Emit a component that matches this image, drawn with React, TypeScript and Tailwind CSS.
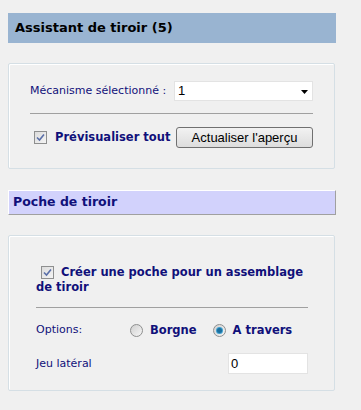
import React from 'react';

const CheckBox = () => (
  <span className="inline-flex h-[13px] w-[13px] shrink-0 items-center justify-center border border-[#8e8f8f] bg-gradient-to-br from-[#dcdcdc] to-[#f4f4f4]">
    <svg width="9" height="9" viewBox="0 0 9 9">
      <path d="M1 4.5 L3.5 7 L8 1.5" fill="none" stroke="#5a6fa8" strokeWidth="1.6" />
    </svg>
  </span>
);

const Radio = ({ checked }: { checked?: boolean }) => (
  <span className="inline-flex h-[13px] w-[13px] shrink-0 items-center justify-center rounded-full border border-[#8e8f8f] bg-gradient-to-br from-[#d0d0d0] to-[#f6f6f6]">
    {checked && <span className="h-[5px] w-[5px] rounded-full bg-[#1b6f9e] shadow-[0_0_0_1px_#3fa0d0]" />}
  </span>
);

const Panel = ({ children, className }: { children: React.ReactNode; className?: string }) => (
  <div className={`w-[327px] rounded-[2px] border border-[#d5dfe5] shadow-[inset_1px_1px_0_#ffffff] ${className ?? ''}`}>
    {children}
  </div>
);

export default function App() {
  return (
    <div className="h-[410px] w-[361px] bg-[#f0f0f0] pl-[8px] pt-[13px] font-['DejaVu_Sans',sans-serif] text-[11px] text-[#10107a]">
      <div className="flex h-[30px] w-[328px] items-center bg-[#99b4d1] pl-[7px] text-[13px] font-bold text-black">
        Assistant de tiroir (5)
      </div>

      <Panel className="mt-[20px] px-[21px] pb-[20px] pt-[17px]">
        <div className="flex items-center justify-between">
          <span>Mécanisme sélectionné :</span>
          <div className="relative flex h-[20px] w-[139px] items-center border border-[#e3e3e3] bg-white pl-[3px] font-['Liberation_Sans',sans-serif] text-[13px] text-black">
            1
            <svg className="absolute right-[4px] top-[8px]" width="7" height="4" viewBox="0 0 7 4">
              <path d="M0 0 H7 L3.5 4 Z" fill="#000" />
            </svg>
          </div>
        </div>
        <div className="mt-[12px] h-px w-full bg-[#a0a0a0]" />
        <div className="mt-[13px] flex items-center pl-[4px]">
          <CheckBox />
          <span className="ml-[8px] whitespace-nowrap text-[11.5px] font-bold">Prévisualiser tout</span>
          <button className="ml-auto h-[21px] w-[137px] shrink-0 rounded-[3px] border border-[#707070] bg-gradient-to-b from-[#f2f2f2] to-[#dddddd] font-['Liberation_Sans',sans-serif] text-[13px] text-black">
            Actualiser l'aperçu
          </button>
        </div>
      </Panel>

      <div className="mt-[21px] flex h-[25px] w-[328px] items-center border-b border-r border-l border-t border-b-[#a0a0a0] border-l-white border-r-[#a0a0a0] border-t-white bg-[#d2d2fc] pl-[4px] text-[12.5px] font-bold">
        Poche de tiroir
      </div>

      <Panel className="mt-[20px] h-[156px] pl-[27px] pr-[26px] pt-[29px]">
        <div className="text-[11.5px] font-bold leading-[15px]">
          <span className="inline-flex items-center gap-[7px] pl-[5px] align-middle">
            <CheckBox />
            <span>Créer une poche pour un assemblage</span>
          </span>
          <br />
          de tiroir
        </div>
        <div className="mt-[12px] h-px w-full bg-[#a0a0a0]" />
        <div className="mt-[14px] flex items-center">
          <span className="w-[94px]">Options:</span>
          <Radio />
          <span className="ml-[7px] text-[11.5px] font-bold">Borgne</span>
          <span className="ml-[16px]"><Radio checked /></span>
          <span className="ml-[7px] text-[11.5px] font-bold">A travers</span>
        </div>
        <div className="mt-[14px] flex items-center justify-between">
          <span>Jeu latéral</span>
          <div className="flex h-[21px] w-[80px] items-center border border-[#e3e3e3] bg-white pl-[2px] font-['Liberation_Sans',sans-serif] text-[13px] text-black">
            0
          </div>
        </div>
      </Panel>
    </div>
  );
}
